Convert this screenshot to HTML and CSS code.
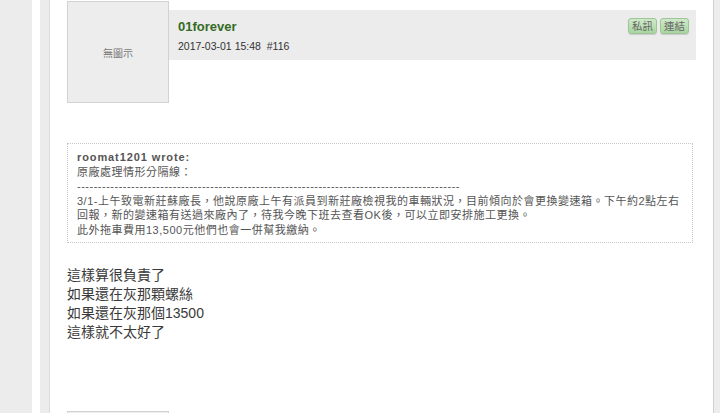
FILE: index.html
```
<!DOCTYPE html>
<html lang="zh-Hant">
    <head>
        <meta charset="utf-8">
        <meta name="viewport" content="width=device-width, initial-scale=1.0">
        <title>01forever #116</title>
        <link rel="stylesheet" href="styles.css">
    </head>
    <body>
        <div class="frame">
            <div class="rail">
                <div class="content">
                    <div class="post">
                        <div class="post-head">
                            <div class="avatar">無圖示</div>
                            <div class="post-bar">
                                <div>
                                    <div class="author">01forever</div>
                                    <div class="post-date">2017-03-01 15:48&nbsp;&nbsp;#116</div>
                                </div>
                                <div class="post-tools">
                                    <a class="tool-button" href="#">私訊</a>
                                    <a class="tool-button" href="#">連結</a>
                                </div>
                            </div>
                        </div>
                        <div class="post-body">
                            <div class="quote">
                                <div class="quote-cite">roomat1201 wrote:</div>
                                <div>原廠處理情形分隔線：</div>
                                <div>--------------------------------------------------------------------------------------------</div>
                                <div>3/1-上午致電新莊蘇廠長，他說原廠上午有派員到新莊廠檢視我的車輛狀況，目前傾向於會更換變速箱。下午約2點左右回報，新的變速箱有送過來廠內了，待我今晚下班去查看OK後，可以立即安排施工更換。</div>
                                <div>此外拖車費用13,500元他們也會一併幫我繳納。</div>
                            </div>
                            <div class="message">
                                這樣算很負責了<br>
                                如果還在灰那顆螺絲<br>
                                如果還在灰那個13500<br>
                                這樣就不太好了
                            </div>
                        </div>
                    </div>
                    <div class="post">
                        <div class="post-head">
                            <div class="avatar"></div>
                        </div>
                    </div>
                </div>
            </div>
        </div>
    </body>
</html>
```

FILE: styles.css
```
* {
    box-sizing: border-box;
}

body {
    margin: 0;
    background-color: #ececec;
    font-family: "Liberation Sans", "Noto Sans CJK TC", sans-serif;
    color: #333;
}

.frame {
    margin-left: 32px;
    width: 682px;
    padding-left: 8px;
    background-color: #fff;
}

.rail {
    padding-left: 9px;
    background-color: #ececec;
}

.content {
    background-color: #fff;
    border-left: 1px solid #dcdcdc;
    border-right: 1px solid #d0d0d0;
    padding: 1px 17px 0 17px;
    height: 420px;
    overflow: hidden;
}

.post-head {
    display: flex;
    align-items: flex-start;
}

.avatar {
    width: 102px;
    height: 102px;
    flex-shrink: 0;
    display: flex;
    align-items: center;
    justify-content: center;
    background-color: #ededed;
    border: 1px solid #d2d2d2;
    color: #777;
    font-size: 10px;
}

.post-bar {
    flex: 1;
    display: flex;
    justify-content: space-between;
    margin-top: 9px;
    height: 50px;
    padding: 9px 7px 0 9px;
    background-color: #ececec;
}

.author {
    color: #356b25;
    font-size: 13px;
    font-weight: bold;
    line-height: 16px;
}

.post-date {
    margin-top: 4px;
    font-size: 10.5px;
    line-height: 14px;
    color: #333;
}

.post-tools {
    display: flex;
    gap: 3px;
    margin-top: -1px;
}

.tool-button {
    display: block;
    height: 16px;
    padding: 0 3px;
    border: 1px solid #9dc596;
    border-radius: 3px;
    background: linear-gradient(#cfe9c9, #a9d5a1);
    box-shadow: 0 1px 1px rgba(0, 0, 0, 0.15);
    color: #666;
    font-size: 10.5px;
    line-height: 14px;
    text-decoration: none;
}

.post-body {
    padding-top: 40px;
}

.quote {
    margin-right: 3px;
    padding: 6px 9px 4px 9px;
    border: 1px dotted #c8c8c8;
    color: #555;
    font-size: 11px;
    line-height: 14.6px;
    letter-spacing: 0.5px;
}

.quote-cite {
    font-weight: bold;
    letter-spacing: 0.9px;
}

.message {
    margin-top: 23px;
    font-size: 14px;
    line-height: 19px;
    color: #3a3a3a;
}

.post + .post {
    margin-top: 69px;
}
```
